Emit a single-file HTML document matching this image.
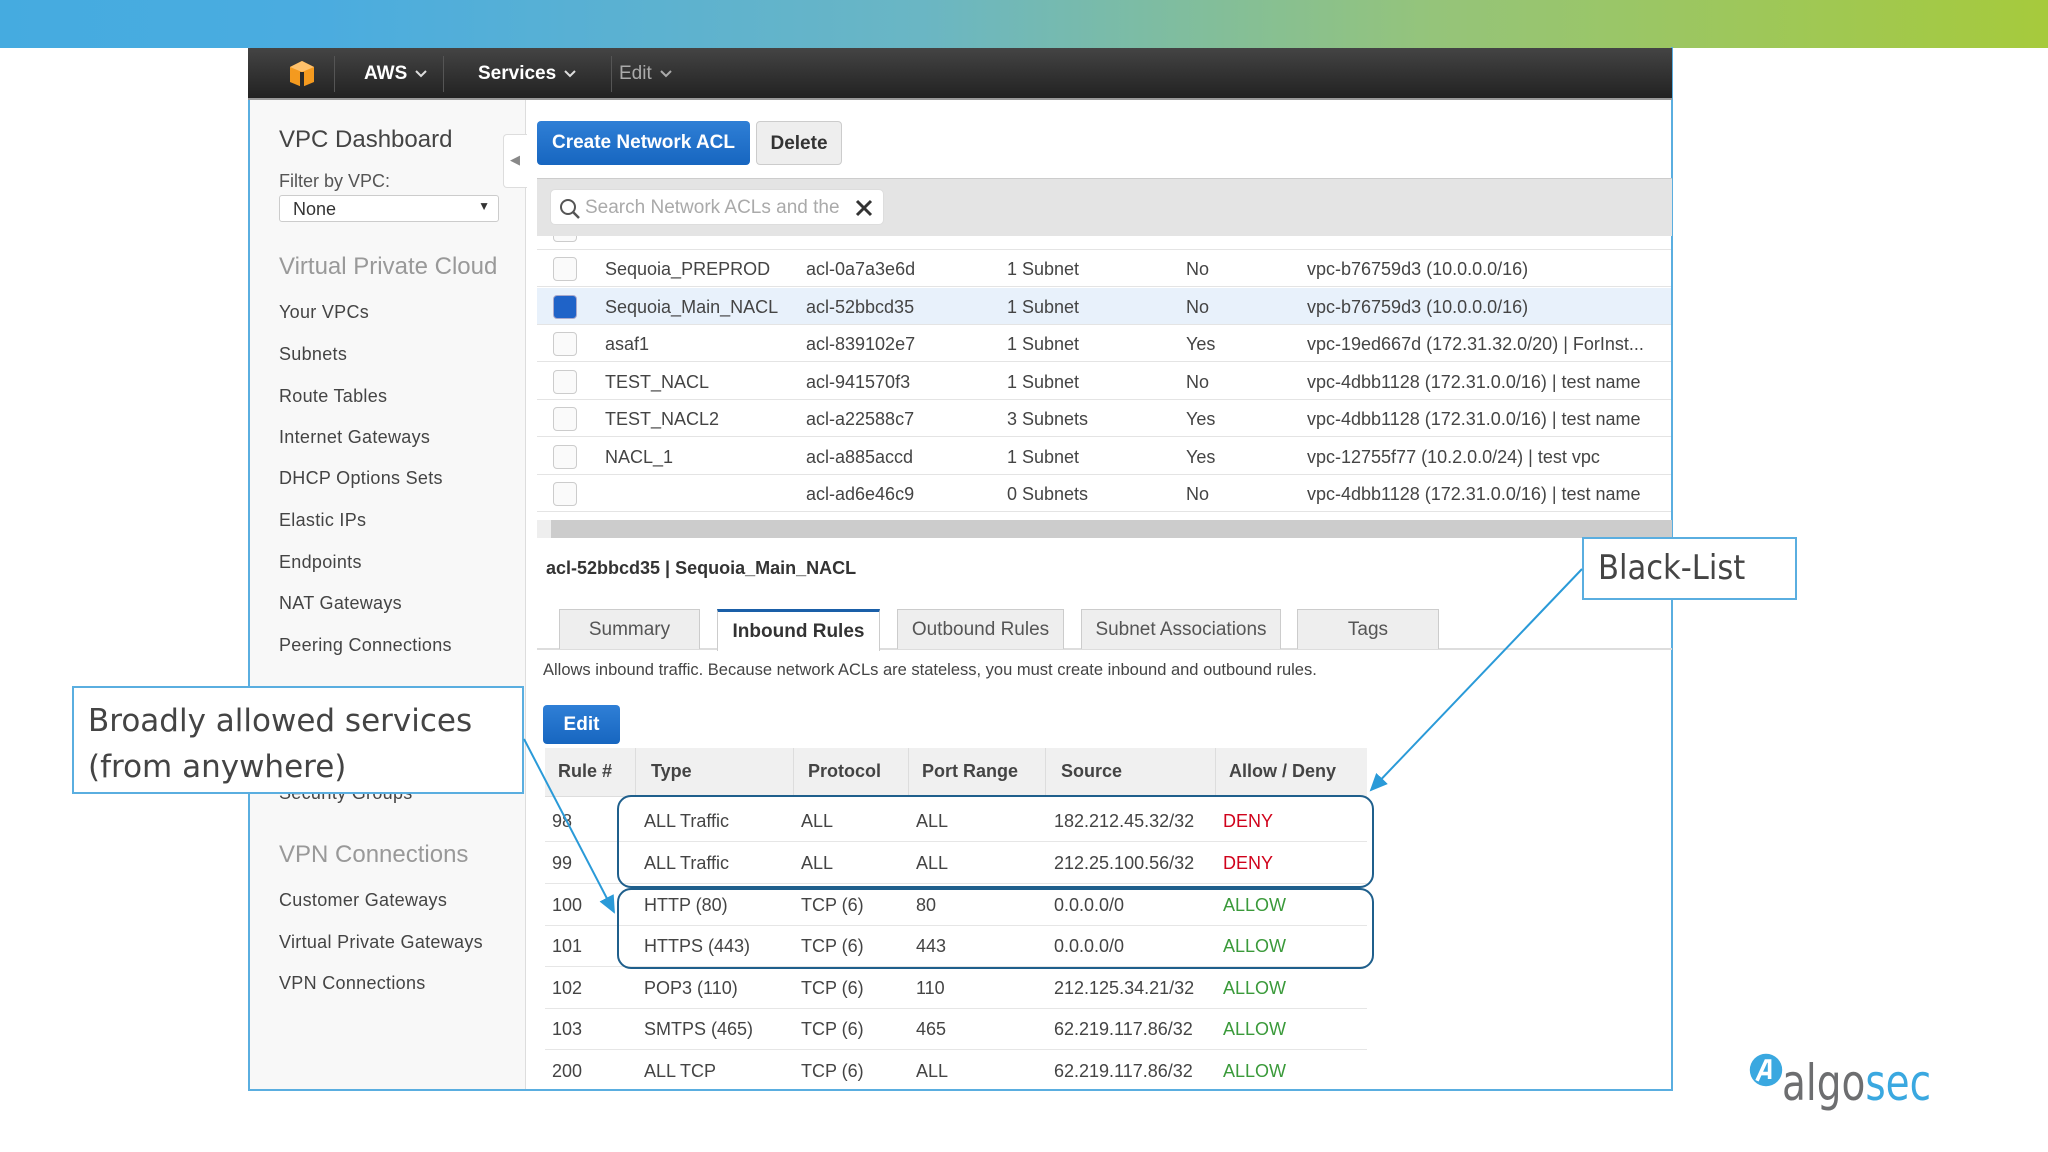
<!DOCTYPE html>
<html><head><meta charset="utf-8"><style>
*{margin:0;padding:0;box-sizing:border-box}
body{width:2048px;height:1152px;position:relative;background:#fff;font-family:"Liberation Sans",Arial,sans-serif;overflow:hidden;color:#444}
.a{position:absolute;white-space:nowrap}
.top{left:0;top:0;width:2048px;height:48px;background:linear-gradient(90deg,#45abe0 0%,#4aace0 15%,#6ab6c4 45%,#95c47a 70%,#a6ca3c 100%)}
.frame{left:248px;top:47px;width:1425px;height:1044px;border:2px solid #5aaee0;border-top:none}
.nav{left:248px;top:48px;width:1424px;height:52px;background:linear-gradient(#444,#222);border-bottom:2px solid #999}
.nav .t{color:#fff;font-weight:bold;font-size:19px;top:15px}
.nav svg.c{margin-left:8px;vertical-align:middle}
.side{left:250px;top:100px;width:276px;height:989px;background:#f8f8f8;border-right:1px solid #ddd}
.si{font-size:18px;color:#444;left:279px;letter-spacing:0.3px}
.sh{font-size:24px;color:#999;left:279px}
.btn{border-radius:4px;font-weight:bold;font-size:19px;text-align:center}
.row{left:537px;width:1134px;height:37px;border-bottom:1px solid #e4e4e4;font-size:18px;color:#444}
.row span{position:absolute;top:9px}
.cb{position:absolute;left:16px;top:7px;width:24px;height:24px;border:1px solid #ccc;border-radius:4px;background:#fafafa}
.tab{top:609px;height:40px;border:1px solid #ccc;border-bottom:none;background:#eee;font-size:19px;color:#555;text-align:center;padding-top:9px}
.tr{left:545px;width:822px;height:41.5px;border-bottom:1px solid #e6e6e6;font-size:18px;color:#444}
.tr span{position:absolute;top:11px}
.th{font-weight:bold;font-size:18px;color:#444;top:13px}
</style></head><body>
<div class="a top"></div>
<div class="a frame"></div>
<div class="a nav">
 <svg class="a" style="left:40px;top:12px" width="28" height="28" viewBox="0 0 28 28"><polygon points="14,1 26,7 26,22 14,27 2,22 2,7" fill="#f49a1f"/><polygon points="14,1 26,7 14,12 2,7" fill="#ffc16b"/><rect x="12" y="12" width="4" height="15" fill="#2a2a2a"/></svg>
 <div class="a" style="left:86px;top:8px;width:1px;height:36px;background:#555"></div>
 <div class="a t" style="left:116px">AWS<svg class="c" width="12" height="8" viewBox="0 0 12 8"><path d="M1 1L6 6L11 1" stroke="#ddd" stroke-width="2" fill="none"/></svg></div>
 <div class="a" style="left:195px;top:8px;width:1px;height:36px;background:#555"></div>
 <div class="a t" style="left:230px">Services<svg class="c" width="12" height="8" viewBox="0 0 12 8"><path d="M1 1L6 6L11 1" stroke="#ddd" stroke-width="2" fill="none"/></svg></div>
 <div class="a" style="left:363px;top:8px;width:1px;height:36px;background:#555"></div>
 <div class="a t" style="left:371px;color:#aaa;font-weight:normal">Edit<svg class="c" width="12" height="8" viewBox="0 0 12 8"><path d="M1 1L6 6L11 1" stroke="#aaa" stroke-width="2" fill="none"/></svg></div>
</div>
<div class="a side"></div>
<div class="a" style="left:279px;top:126px;font-size:24px;color:#444">VPC Dashboard</div>
<div class="a" style="left:279px;top:171px;font-size:18px;color:#555">Filter by VPC:</div>
<div class="a" style="left:279px;top:195px;width:220px;height:27px;border:1px solid #ccc;border-radius:3px;background:#fff;font-size:18px;padding:3px 0 0 13px;color:#333">None<span style="position:absolute;right:8px;top:3px;font-size:12px">&#9660;</span></div>
<div class="a" style="left:503px;top:134px;width:24px;height:54px;background:#fff;border:1px solid #ddd;border-right:none;border-radius:4px 0 0 4px"><span style="position:absolute;left:6px;top:17px;font-size:13px;color:#888">&#9664;</span></div>
<div class="a sh" style="top:253px">Virtual Private Cloud</div>
<div class="a si" style="top:302px">Your VPCs</div>
<div class="a si" style="top:344px">Subnets</div>
<div class="a si" style="top:386px">Route Tables</div>
<div class="a si" style="top:427px">Internet Gateways</div>
<div class="a si" style="top:468px">DHCP Options Sets</div>
<div class="a si" style="top:510px">Elastic IPs</div>
<div class="a si" style="top:552px">Endpoints</div>
<div class="a si" style="top:593px">NAT Gateways</div>
<div class="a si" style="top:635px">Peering Connections</div>
<div class="a si" style="top:783px">Security Groups</div>
<div class="a sh" style="top:841px">VPN Connections</div>
<div class="a si" style="top:890px">Customer Gateways</div>
<div class="a si" style="top:932px">Virtual Private Gateways</div>
<div class="a si" style="top:973px">VPN Connections</div>

<div class="a btn" style="left:537px;top:121px;width:213px;height:44px;background:linear-gradient(#2f7fd6,#1766c0);color:#fff;padding-top:11px">Create Network ACL</div>
<div class="a btn" style="left:756px;top:121px;width:86px;height:44px;background:#eee;border:1px solid #ccc;color:#333;padding-top:11px">Delete</div>
<div class="a row" style="top:222px;height:28px;overflow:hidden"><div class="cb" style="top:-4px"></div><span style="left:269px;top:-6px;color:#888">acl-06f25666</span><span style="left:470px;top:-6px;color:#888">0 Subnets</span><span style="left:649px;top:-6px;color:#888">Yes</span><span style="left:770px;top:-6px;color:#888">vpc-b76759d3 (10.0.0.0/16)</span></div>
<div class="a" style="left:537px;top:178px;width:1135px;height:58px;background:#e4e4e4;border-top:1px solid #ccc"></div>
<div class="a" style="left:550px;top:189px;width:334px;height:36px;background:#fff;border:1px solid #ddd;border-radius:5px;font-size:19px;color:#aaa;padding:7px 0 0 34px">Search Network ACLs and the
 <svg style="position:absolute;left:8px;top:8px" width="22" height="22" viewBox="0 0 22 22"><circle cx="9" cy="9" r="7" fill="none" stroke="#555" stroke-width="2"/><line x1="14" y1="14" x2="20" y2="20" stroke="#555" stroke-width="2.5"/></svg>
 <svg style="position:absolute;left:304px;top:9px" width="18" height="18" viewBox="0 0 18 18"><path d="M2 2L16 16M16 2L2 16" stroke="#333" stroke-width="3"/></svg>
</div>
<div class="a row" style="top:250px"><div class="cb"></div><span style="left:68px">Sequoia_PREPROD</span><span style="left:269px">acl-0a7a3e6d</span><span style="left:470px">1 Subnet</span><span style="left:649px">No</span><span style="left:770px">vpc-b76759d3 (10.0.0.0/16)</span></div>
<div class="a row" style="top:288px;background:#e8f1fb"><div class="cb" style="background:#1f63c8;border-color:#aac"></div><span style="left:68px">Sequoia_Main_NACL</span><span style="left:269px">acl-52bbcd35</span><span style="left:470px">1 Subnet</span><span style="left:649px">No</span><span style="left:770px">vpc-b76759d3 (10.0.0.0/16)</span></div>
<div class="a row" style="top:325px"><div class="cb"></div><span style="left:68px">asaf1</span><span style="left:269px">acl-839102e7</span><span style="left:470px">1 Subnet</span><span style="left:649px">Yes</span><span style="left:770px">vpc-19ed667d (172.31.32.0/20) | ForInst...</span></div>
<div class="a row" style="top:363px"><div class="cb"></div><span style="left:68px">TEST_NACL</span><span style="left:269px">acl-941570f3</span><span style="left:470px">1 Subnet</span><span style="left:649px">No</span><span style="left:770px">vpc-4dbb1128 (172.31.0.0/16) | test name</span></div>
<div class="a row" style="top:400px"><div class="cb"></div><span style="left:68px">TEST_NACL2</span><span style="left:269px">acl-a22588c7</span><span style="left:470px">3 Subnets</span><span style="left:649px">Yes</span><span style="left:770px">vpc-4dbb1128 (172.31.0.0/16) | test name</span></div>
<div class="a row" style="top:438px"><div class="cb"></div><span style="left:68px">NACL_1</span><span style="left:269px">acl-a885accd</span><span style="left:470px">1 Subnet</span><span style="left:649px">Yes</span><span style="left:770px">vpc-12755f77 (10.2.0.0/24) | test vpc</span></div>
<div class="a row" style="top:475px"><div class="cb"></div><span style="left:269px">acl-ad6e46c9</span><span style="left:470px">0 Subnets</span><span style="left:649px">No</span><span style="left:770px">vpc-4dbb1128 (172.31.0.0/16) | test name</span></div>
<div class="a" style="left:537px;top:520px;width:1135px;height:18px;background:#ccc;border-left:14px solid #eee"></div>

<div class="a" style="left:546px;top:558px;font-size:18px;font-weight:bold;color:#333">acl-52bbcd35 | Sequoia_Main_NACL</div>
<div class="a" style="left:537px;top:648px;width:1135px;height:2px;background:#ddd"></div>
<div class="a tab" style="left:559px;width:141px">Summary</div>
<div class="a tab" style="left:717px;width:163px;background:#fff;border-top:3px solid #1a5fa8;height:42px;font-weight:bold;color:#333">Inbound Rules</div>
<div class="a tab" style="left:897px;width:167px">Outbound Rules</div>
<div class="a tab" style="left:1081px;width:200px">Subnet Associations</div>
<div class="a tab" style="left:1297px;width:142px">Tags</div>
<div class="a" style="left:543px;top:661px;font-size:16.5px;color:#444">Allows inbound traffic. Because network ACLs are stateless, you must create inbound and outbound rules.</div>
<div class="a btn" style="left:543px;top:705px;width:77px;height:39px;background:linear-gradient(#2f7fd6,#1766c0);color:#fff;padding-top:9px">Edit</div>

<div class="a" style="left:545px;top:748px;width:822px;height:49px;background:#f0f0f0;border-bottom:1px solid #ddd">
 <div class="a th" style="left:13px">Rule #</div>
 <div class="a" style="left:90px;top:0;width:1px;height:49px;background:#ddd"></div>
 <div class="a th" style="left:106px">Type</div>
 <div class="a" style="left:248px;top:0;width:1px;height:49px;background:#ddd"></div>
 <div class="a th" style="left:263px">Protocol</div>
 <div class="a" style="left:363px;top:0;width:1px;height:49px;background:#ddd"></div>
 <div class="a th" style="left:377px">Port Range</div>
 <div class="a" style="left:500px;top:0;width:1px;height:49px;background:#ddd"></div>
 <div class="a th" style="left:516px">Source</div>
 <div class="a" style="left:670px;top:0;width:1px;height:49px;background:#ddd"></div>
 <div class="a th" style="left:684px">Allow / Deny</div>
</div>
<div class="a tr" style="top:800px"><span style="left:7px">98</span><span style="left:99px">ALL Traffic</span><span style="left:256px">ALL</span><span style="left:371px">ALL</span><span style="left:509px">182.212.45.32/32</span><span style="left:678px;color:#d0021b">DENY</span></div>
<div class="a tr" style="top:842px"><span style="left:7px">99</span><span style="left:99px">ALL Traffic</span><span style="left:256px">ALL</span><span style="left:371px">ALL</span><span style="left:509px">212.25.100.56/32</span><span style="left:678px;color:#d0021b">DENY</span></div>
<div class="a tr" style="top:884px"><span style="left:7px">100</span><span style="left:99px">HTTP (80)</span><span style="left:256px">TCP (6)</span><span style="left:371px">80</span><span style="left:509px">0.0.0.0/0</span><span style="left:678px;color:#3a9a3a">ALLOW</span></div>
<div class="a tr" style="top:925px"><span style="left:7px">101</span><span style="left:99px">HTTPS (443)</span><span style="left:256px">TCP (6)</span><span style="left:371px">443</span><span style="left:509px">0.0.0.0/0</span><span style="left:678px;color:#3a9a3a">ALLOW</span></div>
<div class="a tr" style="top:967px"><span style="left:7px">102</span><span style="left:99px">POP3 (110)</span><span style="left:256px">TCP (6)</span><span style="left:371px">110</span><span style="left:509px">212.125.34.21/32</span><span style="left:678px;color:#3a9a3a">ALLOW</span></div>
<div class="a tr" style="top:1008px"><span style="left:7px">103</span><span style="left:99px">SMTPS (465)</span><span style="left:256px">TCP (6)</span><span style="left:371px">465</span><span style="left:509px">62.219.117.86/32</span><span style="left:678px;color:#3a9a3a">ALLOW</span></div>
<div class="a tr" style="top:1050px;border-bottom:none"><span style="left:7px">200</span><span style="left:99px">ALL TCP</span><span style="left:256px">TCP (6)</span><span style="left:371px">ALL</span><span style="left:509px">62.219.117.86/32</span><span style="left:678px;color:#3a9a3a">ALLOW</span></div>

<div class="a" style="left:617px;top:795px;width:757px;height:93px;border:2px solid #1f5f8c;border-radius:14px"></div>
<div class="a" style="left:617px;top:888px;width:757px;height:81px;border:2px solid #1f5f8c;border-radius:14px"></div>

<div class="a" style="left:1582px;top:537px;width:215px;height:63px;border:2px solid #5aaee0;background:#fff;font-size:34px;color:#444;padding:9px 0 0 14px;font-family:'DejaVu Sans Condensed','Liberation Sans Narrow',sans-serif;font-weight:300">Black-List</div>
<div class="a" style="left:72px;top:686px;width:452px;height:108px;border:2px solid #5aaee0;background:#fff;font-size:31px;color:#444;padding:10px 0 0 14px;line-height:46px;font-family:'DejaVu Sans','Liberation Sans',sans-serif">Broadly allowed services<br>(from anywhere)</div>
<svg class="a" style="left:0;top:0" width="2048" height="1152">
 <defs><marker id="m" markerWidth="10" markerHeight="10" refX="8" refY="5" orient="auto"><path d="M0,1 L9,5 L0,9 Z" fill="#2a9ad8"/></marker></defs>
 <line x1="1582" y1="569" x2="1371" y2="790" stroke="#2a9ad8" stroke-width="2" marker-end="url(#m)"/>
 <line x1="524" y1="739" x2="614" y2="912" stroke="#2a9ad8" stroke-width="2" marker-end="url(#m)"/>
</svg>

<svg class="a" style="left:1748px;top:1052px" width="36" height="36" viewBox="0 0 40 40"><circle cx="20" cy="20" r="18" fill="#3aa8e0"/><path d="M10 32 L20 10 L24 10 L24 30 M14 24 L24 24" stroke="#fff" stroke-width="4" fill="none"/></svg>
<div class="a" style="left:1782px;top:1054px;font-size:50px;transform:scaleX(0.78);transform-origin:0 0;font-family:'DejaVu Sans','Liberation Sans',sans-serif"><span style="color:#6d6e70">algo</span><span style="color:#3aa8e0">sec</span></div>
</body></html>
